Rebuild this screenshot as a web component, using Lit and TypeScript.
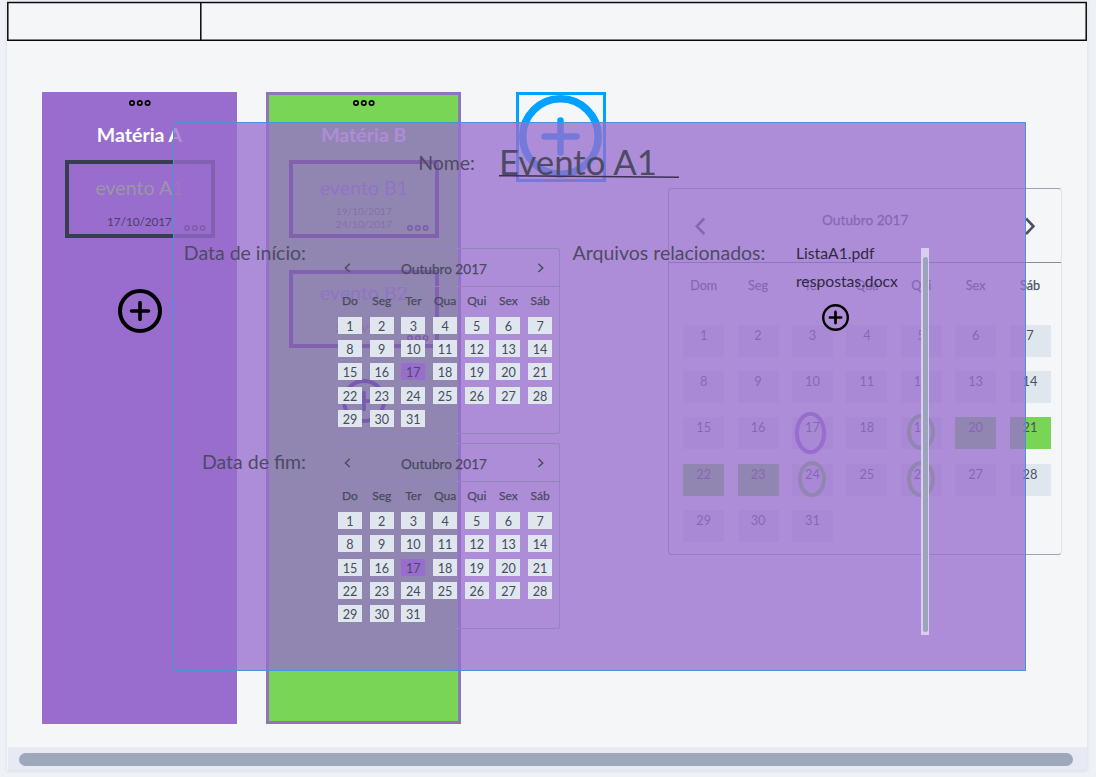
import { LitElement, html, css, svg } from "lit";
import { customElement, property } from "lit/decorators.js";

const DAYS = Array.from({ length: 31 }, (_, i) => i + 1);

@customElement("dot-menu")
class DotMenu extends LitElement {
  static styles = css`
    :host { display: block; width: 22px; height: 8px; }
    svg { display: block; }
  `;
  render() {
    return html`<svg width="22" height="8" viewBox="0 0 22 8" fill="none" stroke="currentColor" stroke-width="1.7">
      ${[3, 10.8, 18.6].map((x) => svg`<circle cx=${x} cy="4" r="2.2"></circle>`)}
    </svg>`;
  }
}

@customElement("plus-circle")
class PlusCircle extends LitElement {
  @property({ type: Number }) size = 44;
  @property({ type: Number }) ring = 4;
  @property({ type: Number }) arm = 8.5;
  @property({ type: Number }) bar = 3.6;
  static styles = css`
    :host { display: block; }
    svg { display: block; }
  `;
  render() {
    const c = this.size / 2;
    return html`<svg width=${this.size} height=${this.size} fill="none" stroke="currentColor" stroke-linecap="round">
      <circle cx=${c} cy=${c} r=${c - this.ring / 2} stroke-width=${this.ring}></circle>
      <path stroke-width=${this.bar} d="M${c - this.arm} ${c}H${c + this.arm}M${c} ${c - this.arm}V${c + this.arm}"></path>
    </svg>`;
  }
}

@customElement("event-card")
class EventCard extends LitElement {
  @property() name = "";
  @property({ type: Array }) dates: string[] = [];
  @property({ type: Boolean, reflect: true }) accent = false;
  @property({ type: Boolean, reflect: true }) raised = false;
  static styles = css`
    :host {
      display: flex; flex-direction: column; align-items: center; position: relative;
      box-sizing: border-box; width: 150px; height: 78px; border: 4px solid #383d50;
    }
    .name { font-size: 19.6px; line-height: 24px; margin-top: 12px; color: #9c96a6; white-space: nowrap; }
    :host([accent]) .name { color: #6f86b0; }
    :host([raised]) .name { margin-top: 7px; }
    .dates {
      flex: 1; display: flex; flex-direction: column; justify-content: center; padding-top: 10px;
      font-size: 11.7px; line-height: 13px; color: #4a3f68;
    }
    :host([accent]) .dates { padding-top: 3px; font-size: 10.1px; color: #5d6a45; }
    :host([raised]) .dates { padding-top: 8px; }
    dot-menu { position: absolute; right: 5px; bottom: 2px; color: #302840; }
    :host([accent]) dot-menu { right: 6px; }
  `;
  render() {
    return html`<div class="name">${this.name}</div>
      <div class="dates">${this.dates.map((d) => html`<span>${d}</span>`)}</div>
      <dot-menu></dot-menu>`;
  }
}

@customElement("mini-calendar")
class MiniCalendar extends LitElement {
  static styles = css`
    :host {
      display: block; box-sizing: border-box; width: 230px; height: 186px;
      border: 1px solid #9285bc; border-left-color: transparent; border-radius: 3px; color: #484b5e;
    }
    .head {
      display: flex; align-items: center; justify-content: space-between; height: 37.5px;
      padding: 3px 13px 0 12px; border-bottom: 1px solid #9285bc; box-sizing: border-box;
      font-size: 13.6px; -webkit-text-stroke: .25px currentColor;
    }
    .head svg { margin-top: -2px; }
    .grid {
      display: grid; grid-template-columns: repeat(7, 24px); column-gap: 7.7px; padding-left: 7.5px;
      text-align: center; font-size: 12.6px;
    }
    .names { line-height: 16px; padding-top: 6.5px; font-size: 12px; -webkit-text-stroke: .25px currentColor; }
    .names span { display: flex; justify-content: center; }
    .days { padding-top: 7.7px; row-gap: 6.3px; }
    .day { height: 17px; line-height: 19px; background: #dfe6ee; }
    .on { background: #986dce; }
  `;
  render() {
    return html`
      <div class="head">
        <svg width="9" height="10" fill="none" stroke="currentColor" stroke-width="1.4"><path d="M6.8 .8L2.4 4.9L6.8 9"></path></svg>
        <span>Outubro 2017</span>
        <svg width="9" height="10" fill="none" stroke="currentColor" stroke-width="1.4"><path d="M2.4 .8L6.8 4.9L2.4 9"></path></svg>
      </div>
      <div class="grid names">${["Do", "Seg", "Ter", "Qua", "Qui", "Sex", "Sáb"].map((n) => html`<span>${n}</span>`)}</div>
      <div class="grid days">${DAYS.map((d) => html`<div class="day ${d === 17 ? "on" : ""}">${d}</div>`)}</div>`;
  }
}

@customElement("month-calendar")
class MonthCalendar extends LitElement {
  static styles = css`
    :host {
      display: block; box-sizing: border-box; width: 394px; height: 367.5px;
      border: 1px solid #9ba4b0; border-right-color: #dfe4ea; border-radius: 4px; color: #4c5160;
    }
    .head {
      display: flex; justify-content: space-between; height: 74px; box-sizing: border-box;
      padding: 28px 25px 0 25.5px; border-bottom: 1.6px solid #848c9c; font-size: 13.7px; -webkit-text-stroke: .3px currentColor;
    }
    .head span { line-height: 18px; margin-top: -6px; }
    .grid { display: grid; grid-template-columns: repeat(7, 41px); column-gap: 13.4px; padding-left: 14.2px; text-align: center; font-size: 12.8px; }
    .names { line-height: 16px; padding-top: 15px; font-size: 12.6px; -webkit-text-stroke: .25px currentColor; }
    .names span { display: flex; justify-content: center; }
    .days { padding-top: 31px; row-gap: 14.2px; }
    .day { position: relative; height: 32px; line-height: 20px; background: #dfe6ee; }
    .range { background: #78d555; }
    .mark::after {
      content: ""; position: absolute; box-sizing: border-box; left: 6px; top: -3px;
      width: 28px; height: 36px; border: 4px solid #78d555; border-radius: 50%;
    }
    .own::after { left: 3.3px; top: -5.8px; width: 31px; height: 42px; border-color: #986dce; }
    .own::after { background: transparent; box-shadow: 0 0 0 .3px #986dce; }
  `;
  private kind(d: number) {
    if (d >= 20 && d <= 23) return "range";
    if (d === 17) return "mark own";
    return [19, 24, 26].includes(d) ? "mark" : "";
  }
  render() {
    return html`
      <div class="head">
        <svg width="12" height="20" fill="none" stroke="currentColor" stroke-width="2.6"><path d="M10.2 1.5L2.8 9.3L10.2 17"></path></svg>
        <span>Outubro 2017</span>
        <svg width="12" height="20" fill="none" stroke="currentColor" stroke-width="2.6"><path d="M2 1.5L9.4 9.3L2 17"></path></svg>
      </div>
      <div class="grid names">${["Dom", "Seg", "Ter", "Qua", "Qui", "Sex", "Sáb"].map((n) => html`<span>${n}</span>`)}</div>
      <div class="grid days">${DAYS.map((d) => html`<div class="day ${this.kind(d)}">${d}</div>`)}</div>`;
  }
}

@customElement("event-dialog")
class EventDialog extends LitElement {
  static styles = css`
    :host {
      display: flex; flex-direction: column; box-sizing: border-box; width: 853px; height: 549px;
      border: 1px solid #4a93db; background: rgba(152, 109, 206, .77); background-clip: padding-box;
      color: #4d4b64; font-size: 19.5px;
    }
    .title { display: flex; height: 125px; box-sizing: border-box; padding: 18px 0 0 245px; }
    .label { line-height: 24px; white-space: nowrap; }
    .title .label { width: 56px; margin-top: 10px; display: flex; justify-content: flex-end; }
    .field { margin-left: 24px; width: 180px; }
    .value { font-size: 34.8px; line-height: 42px; height: 34px; white-space: nowrap; }
    .field svg { display: block; }
    .body { display: flex; }
    .dates { display: grid; align-content: start; grid-template-columns: 132px 230px; column-gap: 23.5px; row-gap: 9.3px; width: 398.6px; }
    .dates .label { display: flex; justify-content: flex-end; margin-top: -7px; }
    .dates .label.end { margin-top: 7px; }
    .files { display: flex; }
    .files .label { width: 223.4px; margin-top: -7px; }
    .list { width: 125px; font-size: 15.7px; line-height: 28px; margin-top: -9px; color: #2f2a42; }
    .list plus-circle { margin: 9px 0 0 26px; color: #000; }
    .scroll { width: 8px; height: 387px; box-sizing: border-box; padding: 9px 1px 3px 2px; background: #d9cdf0; }
    .thumb { height: 100%; border-radius: 3px; background: #9aa5b9; }
  `;
  render() {
    return html`
      <div class="title">
        <div class="label">Nome:</div>
        <div class="field">
          <div class="value">Evento A1</div>
          <svg width="180" height="5"><path d="M0 .7L180 2.2" stroke="#3d2d58" stroke-width="1.5"></path></svg>
        </div>
      </div>
      <div class="body">
        <div class="dates">
          <div class="label">Data de início:</div>
          <mini-calendar></mini-calendar>
          <div class="label end">Data de fim:</div>
          <mini-calendar></mini-calendar>
        </div>
        <div class="files">
          <div class="label">Arquivos relacionados:</div>
          <div class="list">
            <div>ListaA1.pdf</div>
            <div>respostas.docx</div>
            <plus-circle .size=${27} .ring=${2.4} .arm=${5.6} .bar=${2.7}></plus-circle>
          </div>
          <div class="scroll"><div class="thumb"></div></div>
        </div>
      </div>`;
  }
}

@customElement("app-root")
class AppRoot extends LitElement {
  static styles = css`
    :host {
      display: block; position: relative; box-sizing: border-box; width: 1096px; height: 777px; overflow: hidden;
      padding: 1px 9px 0 7px; background: #eef1f6; font-family: Lato, "Open Sans", sans-serif;
    }
    .frame { display: flex; flex-direction: column; height: 768.5px; background: #f4f6f8; box-shadow: 0 1px 3px #d5dbe6; }
    .bar { height: 40px; box-sizing: border-box; flex: none; }
    .bar svg { display: block; }
    .board { display: flex; flex: 1; padding: 50.6px 0 0 35px; }
    .column {
      display: flex; flex-direction: column; align-items: center; box-sizing: border-box; width: 195px; height: 632px;
      border: 3px solid #986dce; background: #986dce; margin-right: 29.3px;
    }
    .green { background: #78d555; border-color: #8f74b9; margin-right: 54.7px; }
    .column > dot-menu { margin-top: 4px; color: #000; }
    .subject { font-size: 19.5px; line-height: 26px; font-weight: 700; color: #fff; margin: 15px 0 12px; }
    .green .subject { color: #f6f2fd; }
    event-card + event-card { margin-top: 32px; }
    .add { margin-top: 51px; color: #000; }
    .green .add { margin-top: 31px; color: #102050; }
    .tile {
      display: flex; align-items: center; justify-content: center; box-sizing: border-box;
      width: 90px; height: 90px; border: 3.5px solid #00a2ff; color: #00a2ff; margin-right: 62px;
    }
    .tile plus-circle { margin-top: -1px; }
    month-calendar { margin-top: 96.4px; }
    .hscroll { height: 22.5px; flex: none; box-sizing: border-box; margin-left: 1px; padding: 6px 14.5px 3.5px 10.5px; background: #e7eaf3; }
    .thumb { height: 13px; border-radius: 7px; background: #9da8ba; }
    event-dialog { position: absolute; left: 173px; top: 122px; }
  `;
  render() {
    return html`
      <div class="frame">
        <div class="bar">
          <svg width="1080" height="40" fill="none" stroke="#0a0a0c" stroke-width="1.5">
            <path d="M.8 1.4H1079.2V39.2H.8ZM193.8 1.4V39.2"></path>
          </svg>
        </div>
        <div class="board">
          <section class="column">
            <dot-menu></dot-menu>
            <div class="subject">Matéria A</div>
            <event-card name="evento A1" .dates=${["17/10/2017"]}></event-card>
            <plus-circle class="add"></plus-circle>
          </section>
          <section class="column green">
            <dot-menu></dot-menu>
            <div class="subject">Matéria B</div>
            <event-card accent name="evento B1" .dates=${["19/10/2017", "24/10/2017"]}></event-card>
            <event-card accent raised name="evento B2" .dates=${["26/10/2017"]}></event-card>
            <plus-circle class="add"></plus-circle>
          </section>
          <div class="tile"><plus-circle .size=${83} .ring=${7.5} .arm=${16} .bar=${6.5}></plus-circle></div>
          <month-calendar></month-calendar>
        </div>
        <div class="hscroll"><div class="thumb"></div></div>
      </div>
      <event-dialog></event-dialog>`;
  }
}
